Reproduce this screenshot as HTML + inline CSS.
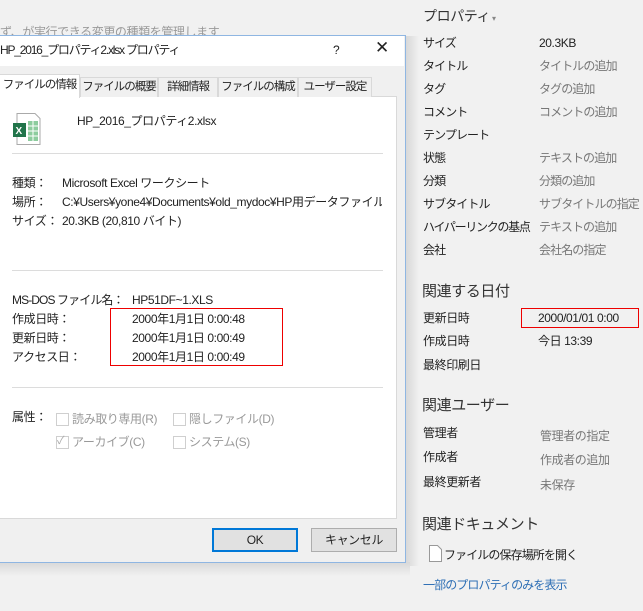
<!DOCTYPE html><html><head><meta charset="utf-8"><style>
body{margin:0;width:643px;height:611px;background:#f1f1f1;position:relative;overflow:hidden;font-family:"Liberation Sans","Noto Sans CJK JP",sans-serif;font-size:12px;color:#222;letter-spacing:-0.4px}
.a{position:absolute;white-space:nowrap;line-height:16px}
.g{color:#777}
.tab{position:absolute;top:77px;height:20px;border:1px solid #d9d9d9;border-bottom:none;background:#f0f0f0;box-sizing:border-box;text-align:center;line-height:19px;font-size:11.5px;white-space:nowrap;overflow:hidden;letter-spacing:-1px}
.hr{position:absolute;left:12px;width:371px;height:1px;background:#dcdcdc}
.cb{position:absolute;width:11px;height:11px;border:1px solid #cfcfcf;background:#fff}
.h{font-size:15px;color:#333}
.r{letter-spacing:-0.9px}
</style></head><body>
<div class="a g" style="left:0;top:24px;color:#999">ず、が実行できる変更の種類を管理します</div>
<div style="position:absolute;left:405px;top:36px;width:14px;height:530px;background:linear-gradient(90deg,#d6d6d6,#f1f1f1)"></div>
<div style="position:absolute;left:0;top:562px;width:410px;height:14px;background:linear-gradient(#d8d8d8,#f1f1f1)"></div>
<div style="position:absolute;left:-2px;top:35px;width:406px;height:526px;background:#f0f0f0;border:1px solid #8fb6e2"></div>
<div style="position:absolute;left:0;top:36px;width:404px;height:30px;background:#fff"></div>
<div class="a" style="left:0;top:42px;letter-spacing:-1.2px">HP_2016_プロパティ2.xlsx プロパティ</div>
<div class="a" style="left:333px;top:42px">?</div>
<div class="a" style="left:375px;top:40px;font-size:17px">✕</div>
<div style="position:absolute;left:-1px;top:96px;width:396px;height:421px;background:#fff;border:1px solid #d9d9d9"></div>
<div class="tab" style="left:-1px;top:74px;width:81px;height:24px;background:#fff;line-height:21px">ファイルの情報</div>
<div class="tab" style="left:80px;width:78px">ファイルの概要</div>
<div class="tab" style="left:158px;width:60px">詳細情報</div>
<div class="tab" style="left:218px;width:80px">ファイルの構成</div>
<div class="tab" style="left:298px;width:74px">ユーザー設定</div>
<svg style="position:absolute;left:12px;top:113px" width="29" height="32"><path d="M5 .5h18l5 5v26H5z" fill="#fff" stroke="#aaa"/><rect x="16" y="8" width="10" height="20" fill="#8dcc9e"/><path d="M16 13h10M16 18h10M16 23h10M21 8v20" stroke="#fff"/><rect x="1" y="10" width="13" height="14" fill="#21744a"/><text x="3.5" y="21" font-size="10" font-weight="bold" fill="#fff" font-family="Liberation Sans">X</text></svg>
<div class="a" style="left:77px;top:113px">HP_2016_プロパティ2.xlsx</div>
<div class="hr" style="top:153px"></div>
<div class="a" style="left:12px;top:175px">種類：</div><div class="a" style="left:62px;top:175px">Microsoft Excel ワークシート</div>
<div class="a" style="left:12px;top:194px">場所：</div><div class="a" style="left:62px;top:194px;width:320px;overflow:hidden">C:¥Users¥yone4¥Documents¥old_mydoc¥HP用データファイル</div>
<div class="a" style="left:12px;top:213px">サイズ：</div><div class="a" style="left:62px;top:213px">20.3KB (20,810 バイト)</div>
<div class="hr" style="top:270px"></div>
<div class="a r" style="left:12px;top:292px">MS-DOS ファイル名：</div><div class="a" style="left:132px;top:292px">HP51DF~1.XLS</div>
<div class="a" style="left:12px;top:311px">作成日時：</div><div class="a" style="left:132px;top:311px">2000年1月1日 0:00:48</div>
<div class="a" style="left:12px;top:330px">更新日時：</div><div class="a" style="left:132px;top:330px">2000年1月1日 0:00:49</div>
<div class="a" style="left:12px;top:349px">アクセス日：</div><div class="a" style="left:132px;top:349px">2000年1月1日 0:00:49</div>
<div style="position:absolute;left:110px;top:308px;width:171px;height:56px;border:1px solid #e00"></div>
<div class="hr" style="top:387px"></div>
<div class="a" style="left:12px;top:409px">属性：</div>
<div class="cb" style="left:56px;top:413px"></div><div class="a" style="left:72px;top:411px;color:#999">読み取り専用(R)</div>
<div class="cb" style="left:173px;top:413px"></div><div class="a" style="left:189px;top:411px;color:#999">隠しファイル(D)</div>
<div class="cb" style="left:56px;top:436px"></div><div class="a" style="left:57px;top:433px;color:#aaa;font-size:11px">✓</div><div class="a" style="left:72px;top:434px;color:#999">アーカイブ(C)</div>
<div class="cb" style="left:173px;top:436px"></div><div class="a" style="left:189px;top:434px;color:#999">システム(S)</div>
<div style="position:absolute;left:212px;top:528px;width:82px;height:20px;border:2px solid #0078d7;background:#e1e1e1;text-align:center;line-height:20px">OK</div>
<div style="position:absolute;left:311px;top:528px;width:84px;height:22px;border:1px solid #adadad;background:#e1e1e1;text-align:center;line-height:22px">キャンセル</div>

<div class="a h" style="left:423px;top:8px;font-size:14px">プロパティ<span style="font-size:8px;color:#888"> ▾</span></div>
<div class="a r" style="left:423px;top:35px">サイズ</div><div class="a" style="left:539px;top:35px">20.3KB</div>
<div class="a r" style="left:423px;top:58px">タイトル</div><div class="a g r" style="left:539px;top:58px">タイトルの追加</div>
<div class="a r" style="left:423px;top:81px">タグ</div><div class="a g r" style="left:539px;top:81px">タグの追加</div>
<div class="a r" style="left:423px;top:104px">コメント</div><div class="a g r" style="left:539px;top:104px">コメントの追加</div>
<div class="a r" style="left:423px;top:127px">テンプレート</div>
<div class="a r" style="left:423px;top:150px">状態</div><div class="a g r" style="left:539px;top:150px">テキストの追加</div>
<div class="a r" style="left:423px;top:173px">分類</div><div class="a g r" style="left:539px;top:173px">分類の追加</div>
<div class="a r" style="left:423px;top:196px">サブタイトル</div><div class="a g r" style="left:539px;top:196px">サブタイトルの指定</div>
<div class="a r" style="left:423px;top:219px;letter-spacing:-1.3px">ハイパーリンクの基点</div><div class="a g r" style="left:539px;top:219px">テキストの追加</div>
<div class="a r" style="left:423px;top:242px">会社</div><div class="a g r" style="left:539px;top:242px">会社名の指定</div>
<div class="a h" style="left:422px;top:284px">関連する日付</div>
<div class="a" style="left:423px;top:310px">更新日時</div><div class="a" style="left:538px;top:310px">2000/01/01 0:00</div>
<div style="position:absolute;left:521px;top:308px;width:116px;height:18px;border:1px solid #e00"></div>
<div class="a" style="left:423px;top:333px">作成日時</div><div class="a" style="left:538px;top:333px">今日 13:39</div>
<div class="a" style="left:423px;top:357px">最終印刷日</div>
<div class="a h" style="left:422px;top:398px">関連ユーザー</div>
<div class="a" style="left:423px;top:425px">管理者</div><div class="a g" style="left:540px;top:428px">管理者の指定</div>
<div class="a" style="left:423px;top:449px">作成者</div><div class="a g" style="left:540px;top:452px">作成者の追加</div>
<div class="a" style="left:423px;top:474px">最終更新者</div><div class="a g" style="left:540px;top:477px">未保存</div>
<div class="a h" style="left:422px;top:517px">関連ドキュメント</div>
<svg style="position:absolute;left:429px;top:545px" width="13" height="17"><path d="M.5.5h8l4 4v12H.5z" fill="#fff" stroke="#999"/></svg>
<div class="a r" style="left:444px;top:547px">ファイルの保存場所を開く</div>
<div class="a r" style="left:423px;top:577px;color:#2e6fb5">一部のプロパティのみを表示</div>
</body></html>
